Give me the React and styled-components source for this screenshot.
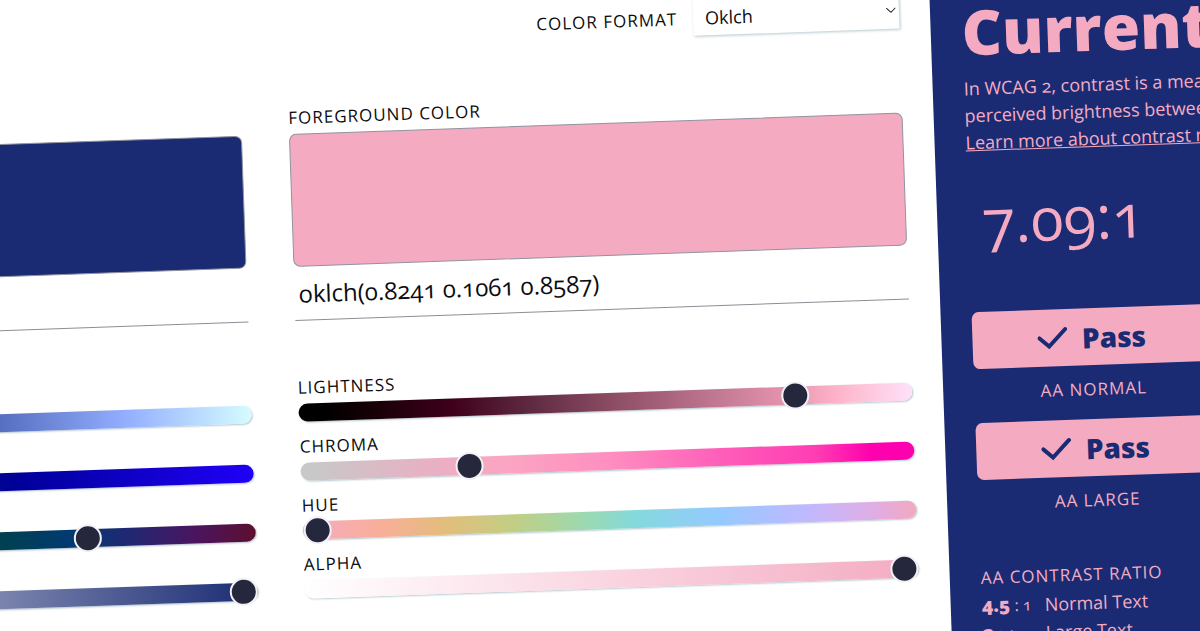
import React, { useState } from "react";
import styled, { createGlobalStyle } from "styled-components";

const pink = "#f4abc2";
const navy = "#1a2b73";

const GlobalStyle = createGlobalStyle`
  *, *::before, *::after { box-sizing: border-box; }
  html, body { margin: 0; background: #fff; }
  body {
    color: #0c0c10;
    font-family: "Open Sans", "Noto Sans", sans-serif;
    font-size: 18px;
    font-variant-numeric: oldstyle-nums;
  }
  input, select, button {
    font: inherit;
    color: inherit;
    font-variant-numeric: inherit;
  }
`;

const Viewport = styled.div`
  height: 100vh;
  overflow: hidden;
`;

/* The tool is wider than the window and tilted, so both sides run off the edges. */
const Canvas = styled.div`
  display: flex;
  width: calc(100% + 438px);
  min-height: calc(100vh + 64px);
  margin-left: -408px;
  transform: rotate(-2deg);
  transform-origin: 408px 0;
`;

const Main = styled.main`
  flex: 1;
  min-width: 0;
  padding: 24px 31px 0;
`;

const caps = `
  font-size: 17px;
  letter-spacing: 1px;
  text-transform: uppercase;
`;

const Toolbar = styled.div`
  display: flex;
  justify-content: flex-end;
  align-items: center;
  gap: 16px;
  margin-bottom: 56px;
`;

const ToolbarLabel = styled.label`
  ${caps}
`;

const SelectBox = styled.div`
  position: relative;
  width: 206px;
`;

const Select = styled.select`
  appearance: none;
  display: block;
  width: 100%;
  height: 36px;
  padding: 0 12px;
  border: 0;
  border-radius: 0;
  background: #fff;
  box-shadow: 1px 1px 3px #b4c6ce;
`;

const Chevron = styled.svg`
  position: absolute;
  right: 3px;
  top: 14px;
  width: 10px;
  height: 7px;
  pointer-events: none;
`;

const Columns = styled.div`
  display: grid;
  grid-template-columns: 1fr 1fr;
  gap: 47px;
`;

const Column = styled.section`
  min-width: 0;
`;

const FieldLabel = styled.label`
  display: block;
  line-height: 24px;
  ${caps}
`;

const Swatch = styled.div`
  height: 133px;
  margin-top: 4px;
  border: 1px solid #92929f;
  border-radius: 7px;
  background: ${(p) => p.$color};
`;

const ValueInput = styled.input`
  display: block;
  width: 100%;
  height: 54px;
  padding: 0 4px;
  border: 0;
  border-bottom: 1px solid #8d8d96;
  background: transparent;
  font-size: 24px;
`;

const Sliders = styled.div`
  display: grid;
  gap: 8px;
  margin-top: 55px;
`;

const SliderLabel = styled.label`
  display: block;
  line-height: 23px;
  ${caps}
`;

const Range = styled.input`
  appearance: none;
  display: block;
  width: 100%;
  height: 28px;
  margin: 0;
  background: transparent;

  &::-webkit-slider-runnable-track {
    height: 18px;
    border-radius: 9px;
    background: ${(p) => p.$track};
    box-shadow: 1px 1px 2px #b4c6ce;
  }
  &::-webkit-slider-thumb {
    appearance: none;
    width: 28px;
    height: 28px;
    margin-top: -5px;
    border: 2px solid #f3f1f6;
    border-radius: 50%;
    background: #25273c;
  }
`;

const Panel = styled.aside`
  flex: 0 0 301px;
  min-width: 0;
  padding: 30px 31px 0;
  background: ${navy};
  color: ${pink};
`;

const Heading = styled.h2`
  margin: 0;
  font-size: 62px;
  line-height: 70px;
  font-weight: 800;
  white-space: nowrap;
`;

const Intro = styled.p`
  margin: 9px 0 0;
  line-height: 27px;
  white-space: nowrap;
`;

const Line = styled.span`
  display: block;
`;

const InfoLink = styled.a`
  color: inherit;
`;

const Ratio = styled.p`
  margin: 24px 0 0;
  padding-left: 14px;
  font-size: 60px;
  line-height: 80px;
`;

const Colon = styled.span`
  font-variant-numeric: normal;
`;

const Results = styled.div`
  display: grid;
  gap: 17px;
  margin-top: 52px;
`;

const Result = styled.div`
  text-align: center;
`;

const Badge = styled.div`
  display: flex;
  justify-content: center;
  align-items: center;
  gap: 14px;
  height: 57px;
  border-radius: 7px;
  background: ${pink};
  color: ${navy};
  font-size: 28px;
  font-weight: 800;
`;

const Check = styled.svg`
  width: 30px;
  height: 22px;
`;

const ResultName = styled.div`
  margin-top: 10px;
  line-height: 27px;
  ${caps}
`;

const RatioTitle = styled.h3`
  margin: 47px 0 0;
  line-height: 28px;
  font-weight: 400;
  ${caps}
`;

const RatioTable = styled.table`
  border-collapse: collapse;
  line-height: 27px;

  th, td { padding: 0; text-align: left; font-weight: 400; }
  th { width: 63px; font-size: 16px; }
  b { font-size: 19px; font-weight: 800; }
`;

const backgroundSliders = [
  { name: "Lightness", max: 1, step: 0.0001, value: 0.3189, track: "linear-gradient(90deg, #000, #1a2b73 32%, #5c74c6 61%, #94b0ff 80%, #d5fcff)" },
  { name: "Chroma", max: 0.4, step: 0.0001, value: 0.1266, track: "linear-gradient(90deg, #333, #1a2b73 32%, #000098 61%, #2000f8)" },
  { name: "Hue", max: 360, step: 0.1, value: 265.4, track: "linear-gradient(90deg, #5c0f2f, #3d3000 30%, #00433a 50%, #003f56 61%, #003a72 70%, #1f2872 79%, #4a1560 90%, #5c0f2f)" },
  { name: "Alpha", max: 1, step: 0.01, value: 1, track: "linear-gradient(90deg, #fff, #1a2b73)" },
];

const foregroundSliders = [
  { name: "Lightness", max: 1, step: 0.0001, value: 0.8241, track: "linear-gradient(90deg, #000 4%, #170006 12%, #3f001c 25%, #5f2b42 38%, #8b4c63 51%, #b8708a 65%, #e795b0 80%, #ffb4ca 88%, #fde2fa)" },
  { name: "Chroma", max: 0.4, step: 0.0001, value: 0.1061, track: "linear-gradient(90deg, #c8c8c8 2%, #f0abc2 26%, #fba5c2 33%, #fe8fc0 50%, #fe58b8 71%, #ff3db3 84%, #ff00ae 93%)" },
  { name: "Hue", max: 360, step: 0.1, value: 0.8587, track: "linear-gradient(90deg, #f4abc2, #f8ae98 13%, #e3bd7c 23%, #bfcf85 35%, #9bd9b0 46%, #84d9dc 54%, #94caff 68%, #c0b8ff 82%, #dfade4 93%, #f2a9c0)" },
  { name: "Alpha", max: 1, step: 0.01, value: 1, track: "linear-gradient(90deg, #fff, #f4abc2)" },
];

function ColorColumn({ id, label, color, value, sliders }) {
  return (
    <Column>
      <FieldLabel htmlFor={id}>{label}</FieldLabel>
      <Swatch $color={color} />
      <ValueInput id={id} defaultValue={value} spellCheck={false} />
      <Sliders>
        {sliders.map((s) => (
          <div key={s.name}>
            <SliderLabel htmlFor={`${id}-${s.name}`}>{s.name}</SliderLabel>
            <Range
              id={`${id}-${s.name}`}
              type="range"
              min={0}
              max={s.max}
              step={s.step}
              defaultValue={s.value}
              $track={s.track}
            />
          </div>
        ))}
      </Sliders>
    </Column>
  );
}

function PassResult({ name }) {
  return (
    <Result>
      <Badge>
        <Check viewBox="0 0 30 22" fill="none" stroke="currentColor" strokeWidth="4" strokeLinecap="round" strokeLinejoin="miter" aria-hidden="true">
          <path d="M2 10.500 L11.500 19 L28 2" />
        </Check>
        Pass
      </Badge>
      <ResultName>{name}</ResultName>
    </Result>
  );
}

export default function App() {
  const [format, setFormat] = useState("oklch");
  return (
    <Viewport>
      <GlobalStyle />
      <Canvas>
        <Main>
          <Toolbar>
            <ToolbarLabel htmlFor="format">Color Format</ToolbarLabel>
            <SelectBox>
              <Select id="format" value={format} onChange={(e) => setFormat(e.target.value)}>
                <option value="oklch">Oklch</option>
              </Select>
              <Chevron viewBox="0 0 10 7" fill="none" stroke="#222" aria-hidden="true">
                <path d="M0.5 1 L5 5.500 L9.500 1" />
              </Chevron>
            </SelectBox>
          </Toolbar>
          <Columns>
            <ColorColumn id="background" label="Background Color" color={navy} value="oklch(0.3189 0.1266 265.4)" sliders={backgroundSliders} />
            <ColorColumn id="foreground" label="Foreground Color" color={pink} value="oklch(0.8241 0.1061 0.8587)" sliders={foregroundSliders} />
          </Columns>
        </Main>
        <Panel>
          <Heading>Current</Heading>
          <Intro>
            <Line>In WCAG 2, contrast is a measure</Line>
            <Line>perceived brightness between</Line>
            <InfoLink href="#contrast-ratio">Learn more about contrast ratio</InfoLink>
          </Intro>
          <Ratio>7.09<Colon>:</Colon>1</Ratio>
          <Results>
            <PassResult name="AA Normal" />
            <PassResult name="AA Large" />
          </Results>
          <RatioTitle>AA Contrast Ratio</RatioTitle>
          <RatioTable>
            <tbody>
              <tr><th scope="row"><b>4.5</b> : 1</th><td>Normal Text</td></tr>
              <tr><th scope="row"><b>3</b> : 1</th><td>Large Text</td></tr>
            </tbody>
          </RatioTable>
        </Panel>
      </Canvas>
    </Viewport>
  );
}
